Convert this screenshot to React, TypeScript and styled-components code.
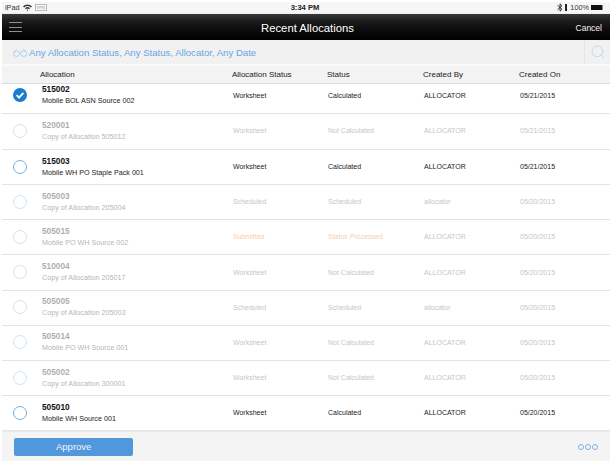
import React from 'react';
import styled, { createGlobalStyle } from 'styled-components';
import { Search } from 'lucide-react';

const GlobalStyle = createGlobalStyle`
  html, body {
    margin: 0;
    padding: 0;
    background: #fff;
    font-family: "Liberation Sans", Arial, sans-serif;
  }
`;

type Allocation = {
  id: string;
  name: string;
  allocStatus: string;
  status: string;
  createdBy: string;
  createdOn: string;
  enabled?: boolean;
  checked?: boolean;
  submitted?: boolean;
};

const rows: Allocation[] = [
  { id: '515002', name: 'Mobile BOL ASN Source 002', allocStatus: 'Worksheet', status: 'Calculated', createdBy: 'ALLOCATOR', createdOn: '05/21/2015', enabled: true, checked: true },
  { id: '520001', name: 'Copy of Allocation 505012', allocStatus: 'Worksheet', status: 'Not Calculated', createdBy: 'ALLOCATOR', createdOn: '05/21/2015' },
  { id: '515003', name: 'Mobile WH PO Staple Pack 001', allocStatus: 'Worksheet', status: 'Calculated', createdBy: 'ALLOCATOR', createdOn: '05/21/2015', enabled: true },
  { id: '505003', name: 'Copy of Allocation 205004', allocStatus: 'Scheduled', status: 'Scheduled', createdBy: 'allocator', createdOn: '05/20/2015' },
  { id: '505015', name: 'Mobile PO WH Source 002', allocStatus: 'Submitted', status: 'Status Processed', createdBy: 'ALLOCATOR', createdOn: '05/20/2015', submitted: true },
  { id: '510004', name: 'Copy of Allocation 205017', allocStatus: 'Worksheet', status: 'Not Calculated', createdBy: 'ALLOCATOR', createdOn: '05/20/2015' },
  { id: '505005', name: 'Copy of Allocation 205003', allocStatus: 'Scheduled', status: 'Scheduled', createdBy: 'allocator', createdOn: '05/20/2015' },
  { id: '505014', name: 'Mobile PO WH Source 001', allocStatus: 'Worksheet', status: 'Not Calculated', createdBy: 'ALLOCATOR', createdOn: '05/20/2015' },
  { id: '505002', name: 'Copy of Allocation 300001', allocStatus: 'Worksheet', status: 'Not Calculated', createdBy: 'ALLOCATOR', createdOn: '05/20/2015' },
  { id: '505010', name: 'Mobile WH Source 001', allocStatus: 'Worksheet', status: 'Calculated', createdBy: 'ALLOCATOR', createdOn: '05/20/2015', enabled: true },
];

function Glasses() {
  return (
    <svg width="15" height="9" viewBox="0 0 15 9" fill="none" stroke="#a9cdee" strokeWidth="0.9">
      <circle cx="3.6" cy="5.6" r="2.9" />
      <circle cx="10.8" cy="5.6" r="2.9" />
      <path d="M6.4 5 Q7.2 4.3 8 5" />
      <path d="M.8 4.6 L3.4 1.6 M13.6 4.6 L10.4 .8" />
    </svg>
  );
}

function Wifi() {
  return (
    <svg width="9" height="7" viewBox="0 0 9 7" fill="#333">
      <path d="M0 2.3 Q4.5 -1.5 9 2.3 L7.9 3.4 Q4.5 .7 1.1 3.4 Z" />
      <path d="M2 4.2 Q4.5 2 7 4.2 L6 5.2 Q4.5 4 3 5.2 Z" />
      <path d="M3.6 5.8 Q4.5 5 5.4 5.8 L4.5 6.9 Z" />
    </svg>
  );
}

function Bluetooth() {
  return (
    <svg width="6" height="9" viewBox="0 0 6 9" fill="none" stroke="#222" strokeWidth="0.9">
      <path d="M.5 2.3 L5 6.3 L3 8.2 V.8 L5 2.7 L.5 6.7" />
    </svg>
  );
}

function CheckCircle() {
  return (
    <svg width="14" height="14" viewBox="0 0 14 14">
      <circle cx="7" cy="7" r="7" fill="#1b7cd0" />
      <path d="M3.6 7.2 L6 9.6 L10.4 4.9" fill="none" stroke="#fff" strokeWidth="1.8" />
    </svg>
  );
}

export default function App() {
  return (
    <>
      <GlobalStyle />
      <Page>
        <StatusBar>
          <StatusLeft>
            <span>iPad</span>
            <Wifi />
            <Carrier>VPN</Carrier>
          </StatusLeft>
          <StatusTime>3:34 PM</StatusTime>
          <StatusRight>
            <Bluetooth />
            <Signal />
            <span>100%</span>
            <Battery />
          </StatusRight>
        </StatusBar>
        <NavBar>
          <Hamburger>
            <i />
            <i />
            <i />
          </Hamburger>
          <NavTitle>Recent Allocations</NavTitle>
          <CancelLabel>Cancel</CancelLabel>
        </NavBar>
        <FilterBar>
          <FilterText>
            <Glasses />
            <span>Any Allocation Status, Any Status, Allocator, Any Date</span>
          </FilterText>
          <SearchButton>
            <Search size={16} strokeWidth={1.1} color="#a9d2ee" />
          </SearchButton>
        </FilterBar>
        <HeaderRow>
          <span />
          <span>Allocation</span>
          <span>Allocation Status</span>
          <span>Status</span>
          <span>Created By</span>
          <span>Created On</span>
        </HeaderRow>
        <List>
          {rows.map((r, i) => (
            <Row key={r.id} $first={i === 0} $second={i === 1}>
              <Dim $enabled={r.enabled}>
                {r.checked ? <CheckCircle /> : <Radio />}
              </Dim>
              <Dim $enabled={r.enabled}>
                <RowId>{r.id}</RowId>
                <RowName>{r.name}</RowName>
              </Dim>
              <Cell $enabled={r.enabled} $submitted={r.submitted}>{r.allocStatus}</Cell>
              <Cell $enabled={r.enabled} $submitted={r.submitted}>{r.status}</Cell>
              <Cell $enabled={r.enabled}>{r.createdBy}</Cell>
              <Cell $enabled={r.enabled}>{r.createdOn}</Cell>
            </Row>
          ))}
        </List>
        <Footer>
          <ApproveButton>Approve</ApproveButton>
          <Dots>
            <i />
            <i />
            <i />
          </Dots>
        </Footer>
      </Page>
    </>
  );
}

const Page = styled.div`
  width: 608px;
  margin: 2px 0 0 2px;
  height: 459px;
  display: flex;
  flex-direction: column;
`;

const StatusBar = styled.div`
  height: 11px;
  background: #f6f6f6;
  display: grid;
  grid-template-columns: 1fr auto 1fr;
  align-items: center;
  padding: 0 7px 0 3px;
  font-size: 7.3px;
  color: #333;
`;

const StatusLeft = styled.div`
  display: flex;
  align-items: center;
  gap: 3px;
`;

const Carrier = styled.span`
  font-size: 4px;
  color: #999;
  border: 1px solid #bbb;
  padding: 0 1px;
  line-height: 5px;
`;

const StatusTime = styled.div`
  font-weight: bold;
  font-size: 7.6px;
  color: #222;
  margin-left: 2px;
`;

const StatusRight = styled.div`
  display: flex;
  align-items: center;
  justify-content: flex-end;
  gap: 2px;
`;

const Signal = styled.span`
  width: 2px;
  height: 7px;
  background: #222;
  margin-right: 1px;
`;

const Battery = styled.span`
  width: 11px;
  height: 5px;
  background: #111;
  border-right: 1px solid #888;
`;

const NavBar = styled.div`
  height: 28px;
  border-top: 1px solid #eee;
  box-sizing: border-box;
  background: linear-gradient(#3a3a3a 0, #1d1d1d 25%, #0c0c0c 60%, #000 100%);
  display: grid;
  grid-template-columns: 1fr auto 1fr;
  align-items: center;
  padding: 2px 6px 0 7px;
`;

const Hamburger = styled.div`
  display: flex;
  flex-direction: column;
  gap: 3.5px;
  width: 13px;
  margin-top: -2px;

  i {
    display: block;
    height: 1px;
    background: #8f8f8f;
  }
`;

const NavTitle = styled.div`
  color: #fff;
  font-size: 11.3px;
  margin-left: 2px;
`;

const CancelLabel = styled.div`
  color: #f2f2f2;
  font-size: 8.5px;
  justify-self: end;
  padding-right: 2px;
`;

const FilterBar = styled.div`
  height: 24px;
  background: #f1f1f1;
  display: flex;
  align-items: stretch;
  justify-content: space-between;
  border-bottom: 2px solid #fafafa;
`;

const FilterText = styled.div`
  display: flex;
  align-items: center;
  gap: 1px;
  padding: 1px 0 0 11px;
  color: #64a6e3;
  font-size: 9.6px;
`;

const SearchButton = styled.div`
  width: 26px;
  display: flex;
  align-items: center;
  justify-content: center;
  border-left: 1px solid #e6e6e6;
  box-sizing: border-box;
`;

const HeaderRow = styled.div`
  height: 17px;
  background: #f3f3f3;
  border-bottom: 1px solid #dcdcdc;
  display: grid;
  grid-template-columns: 38px 192px 95px 96px 96px 1fr;
  align-items: center;
  color: #222;
  font-size: 8px;
`;

const List = styled.div`
  flex: 1;
  display: flex;
  flex-direction: column;
`;

const Row = styled.div<{ $first?: boolean; $second?: boolean }>`
  height: ${({ $first, $second }) => ($first ? 30 : $second ? 36 : 35.2)}px;
  padding-bottom: ${({ $first }) => ($first ? 6 : 1)}px;
  box-sizing: border-box;
  border-bottom: 1px solid #e3e3e8;
  display: grid;
  grid-template-columns: 40px 191px 95px 96px 96px 1fr;
  align-items: center;
  font-size: 7px;

  & > :first-child {
    padding-left: 11px;
    display: flex;
  }
`;

const Dim = styled.div<{ $enabled?: boolean }>`
  opacity: ${({ $enabled }) => ($enabled ? 1 : 0.35)};
`;

const Radio = styled.span`
  display: block;
  width: 14px;
  height: 14px;
  box-sizing: border-box;
  border-radius: 50%;
  border: 1px solid #6fb0e0;
`;

const RowId = styled.div`
  font-size: 8.3px;
  font-weight: bold;
  color: #111;
  line-height: 11px;
`;

const RowName = styled.div`
  font-size: 7.2px;
  color: #222;
  line-height: 11px;
`;

const Cell = styled.div<{ $enabled?: boolean; $submitted?: boolean }>`
  color: ${({ $enabled, $submitted }) =>
    $submitted ? '#f5cfb0' : $enabled ? '#222' : '#c6c6c6'};
`;

const Footer = styled.div`
  height: 29px;
  background: #f4f4f4;
  border-top: 1px solid #eaeaea;
  display: flex;
  align-items: center;
  justify-content: space-between;
  padding: 0 12px 0 12px;
`;

const ApproveButton = styled.div`
  width: 119px;
  height: 18px;
  background: #5097dc;
  border-radius: 2px;
  color: #f2f6fb;
  font-size: 9.5px;
  display: flex;
  align-items: center;
  padding-left: 42px;
  box-sizing: border-box;
`;

const Dots = styled.div`
  display: flex;
  gap: 1px;

  i {
    display: block;
    width: 6px;
    height: 6px;
    box-sizing: border-box;
    border: 1.3px solid #7fb0e4;
    border-radius: 50%;
  }
`;
